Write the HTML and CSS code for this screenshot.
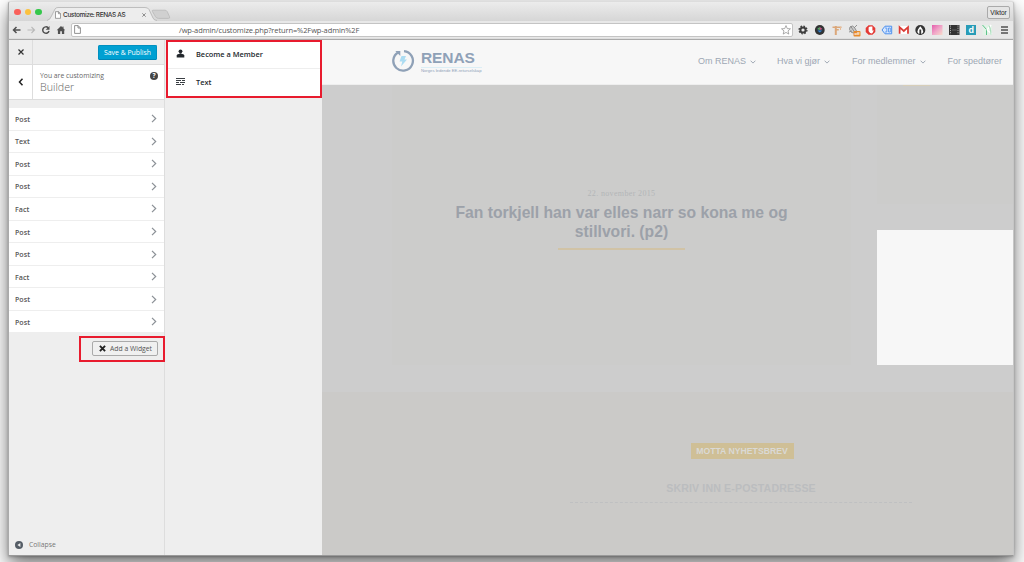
FILE: index.html
```html
<!DOCTYPE html>
<html lang="en">
<head>
<meta charset="utf-8">
<title>Customize: RENAS AS</title>
<link rel="stylesheet" href="styles.css">
</head>
<body>
<svg width="0" height="0" class="defs"><defs>
<symbol id="chev" viewBox="0 0 6 9"><path d="M1 .8 4.7 4.5 1 8.2" fill="none" stroke="#8b9096" stroke-width="1.2"/></symbol>
<symbol id="down" viewBox="0 0 6 4"><path d="M.6.7 3 3.1 5.4.7" fill="none" stroke="#a1aab5" stroke-width="1"/></symbol>
<symbol id="page" viewBox="0 0 7 9"><path d="M.6.6h3.6l2.2 2.3v5.5H.6zM4 .7V3h2.3" fill="#fff" stroke="#777" stroke-width=".8"/></symbol>
</defs></svg>
<div class="window">
  <div class="tabs">
    <svg class="tab-shape" width="130" height="20" viewBox="0 0 130 20"><path d="M0 19.5 Q3 19 4.5 15 L8 8 Q9 6.5 11 6.5 H98 Q101 6.5 102 8.5 L106 17 Q107 19.5 110 19.5 V20 H0Z" fill="#ededed"/><path d="M0 19.5 Q3 19 4.5 15 L8 8 Q9 6.5 11 6.5 H98 Q101 6.5 102 8.5 L106 17 Q107 19.5 110 19.5" fill="none" stroke="#aaa" stroke-width=".7"/><path d="M106 9.200h12q1.500 0 2.300 1.500l2.200 5q.8 1.700-1 1.700h-10q-2 0-3-1.700l-3-5q-.8-1.500.5-1.500z" fill="#d0d0d0" stroke="#b4b4b4" stroke-width=".7"/></svg>
    <div class="lights"><i class="red"></i><i class="yellow"></i><i class="green"></i></div>
    <svg class="tab-page" width="6" height="8"><use href="#page"/></svg>
    <span class="tab-title">Customize: RENAS AS</span>
    <svg class="tab-close" width="4" height="4" viewBox="0 0 4 4"><path d="M.3.3 3.700 3.700M3.700.3.3 3.700" stroke="#777" stroke-width=".8"/></svg>
    <span class="profile">Viktor</span>
  </div>
  <div class="toolbar">
    <svg class="nav" width="56" height="12" viewBox="0 0 56 12"><path d="M8.500 6H1.800M4.500 3 1.500 6l3 3" fill="none" stroke="#505050" stroke-width="1.500"/><path d="M15.500 6H22M19.500 3l3 3-3 3" fill="none" stroke="#b9b9b9" stroke-width="1.100"/><path d="M36.200 3.800A3.200 3.200 0 1 0 37 7" fill="none" stroke="#505050" stroke-width="1.500"/><path d="M37.500 2v3.700h-3.800z" fill="#505050"/><path d="M49 2 44.700 6.200h1.200v3.700h2.300V7.300h1.700v2.600h2.300V6.200h1L51.500 4.500V2.600h-1v.9z" fill="#505050"/></svg>
    <div class="url"><svg width="7" height="9"><use href="#page"/></svg><span>/wp-admin/customize.php?return=%2Fwp-admin%2F</span>
      <svg width="10" height="10" viewBox="0 0 10 10"><path d="m5 .6 1.250 3 3.200.2L7 5.900l.8 3.200L5 7.400 2.200 9.100 3 5.900.5 3.800l3.200-.2z" fill="#fff" stroke="#888" stroke-width=".7"/></svg></div>
    <svg class="ext" width="213" height="14" viewBox="0 0 213 14">
      <circle cx="7" cy="7" r="2.600" fill="none" stroke="#3d3d3d" stroke-width="2"/><circle cx="7" cy="7" r="3.900" fill="none" stroke="#3d3d3d" stroke-width="1.300" stroke-dasharray="1.600 1.460"/>
      <circle cx="23.800" cy="7" r="4.900" fill="#333"/><circle cx="23.800" cy="7" r="2.700" fill="#293c50"/><path d="M21.200 6l2.600-2V7z" fill="#5bb860"/><path d="M23.800 4 26.500 6l-2.700 1z" fill="#c9557e"/><path d="M21.500 7.500h4.500L23.800 9.500z" fill="#3a86cc"/>
      <path d="M36.500 4.200h9M39.800 6.800h3" stroke="#dba77a" stroke-width="1.600"/><path d="M39.800 3v9" stroke="#dba77a" stroke-width="2"/><path d="M44.500 4v3" stroke="#e9bd98"/>
      <path d="m54 4 2.500-1 2 1.500 2 3.500-2 2-3-.5-2-3zM54.500 3l4 6M61 2l-3 3M53 9l3-1" stroke="#888" fill="#ccc" stroke-width=".9"/><rect x="57.500" y="8" width="7" height="5.500" rx="1" fill="#e78b2c"/><text x="58.500" y="12.200" class="off">off</text>
      <path d="M72.500 2.300h4l2.800 2.800v4L76.500 11.800h-4l-2.800-2.800V5z" fill="#e43935"/><path d="M72.600 4.500q.4-1.300 3.800-.9v4.200l1.200-.8q-.5 3.400-2.300 3.400-1.500 0-2.700-2.400z" fill="#fff"/>
      <path d="M89 3.200h6.700v7.600H89L86 7z" fill="#d6e7ff" stroke="#4c8fed"/><path d="M89 5h1.800v4H89M92.500 5h1.800v4h-1.800z" stroke="#4c8fed" fill="none" stroke-width=".8"/>
      <rect x="102.500" y="3" width="10.500" height="8" rx=".8" fill="#fff"/><path d="M103.600 10.800V4.200l4.200 3.800 4.200-3.800v6.600" fill="none" stroke="#db3c36" stroke-width="1.800"/>
      <circle cx="124.300" cy="7" r="5" fill="#353535"/><path d="M122.600 10.800q-2-2.300-.6-4.300 1.200-1.800 2.300-3.200 1.100 1.400 2.300 3.200 1.400 2-.6 4.300z" fill="#fff"/><path d="M124.300 6.500v5.500" stroke="#353535" stroke-width="1.800"/>
      <rect x="136" y="2" width="10.500" height="10" fill="url(#pink)"/><defs><linearGradient id="pink" x2="1" y2="1"><stop stop-color="#e45dac"/><stop offset=".5" stop-color="#f0a4c8"/><stop offset="1" stop-color="#f7dccb"/></linearGradient></defs>
      <rect x="153" y="2" width="10.500" height="10" fill="#333"/><path d="M154.500 2.500v9M162 2.500v9" stroke="#aaa" stroke-width="1" stroke-dasharray="1.200 1"/><path d="M156 7h4.700" stroke="#777" stroke-width=".7"/>
      <rect x="170" y="2" width="10" height="10" fill="#299cb7"/><text x="172.500" y="10" class="dee">d</text>
      <rect x="186.500" y="2" width="9.500" height="10" fill="#e3f2e7"/><path d="m186.500 2 4 4.500V12" fill="none" stroke="#5ec48a"/><path d="m191 7 4-5M191 7l5 4" fill="none" stroke="#fff" stroke-width="1.500"/><path d="m193 2.500 1.500 4 .5 5" fill="none" stroke="#a6dcb9"/>
      <path d="M205 4h7M205 7h7M205 10h7" stroke="#505050" stroke-width="1.500"/>
    </svg>
  </div>
  <div class="content">
    <aside class="sidebar">
      <div class="actions"><div class="square"><svg width="6" height="6" viewBox="0 0 6 6"><path d="m.5.5 5 5m0-5-5 5" stroke="#333" stroke-width="1.200"/></svg></div><span class="save">Save &amp; Publish</span></div>
      <div class="heading"><div class="square"><svg width="6" height="8" viewBox="0 0 6 8"><path d="M4.500.8 1.500 4l3 3.200" fill="none" stroke="#222" stroke-width="1.500"/></svg></div>
        <div class="titles"><span class="small">You are customizing</span><span class="builder">Builder</span></div><span class="help">?</span></div>
      <ul class="list">
        <li><span>Post</span><svg width="6" height="9"><use href="#chev"/></svg></li>
        <li><span>Text</span><svg width="6" height="9"><use href="#chev"/></svg></li>
        <li><span>Post</span><svg width="6" height="9"><use href="#chev"/></svg></li>
        <li><span>Post</span><svg width="6" height="9"><use href="#chev"/></svg></li>
        <li><span>Fact</span><svg width="6" height="9"><use href="#chev"/></svg></li>
        <li><span>Post</span><svg width="6" height="9"><use href="#chev"/></svg></li>
        <li><span>Post</span><svg width="6" height="9"><use href="#chev"/></svg></li>
        <li><span>Fact</span><svg width="6" height="9"><use href="#chev"/></svg></li>
        <li><span>Post</span><svg width="6" height="9"><use href="#chev"/></svg></li>
        <li><span>Post</span><svg width="6" height="9"><use href="#chev"/></svg></li>
      </ul>
      <div class="add-box"><div class="add"><svg width="7" height="7" viewBox="0 0 7 7"><path d="m.9.9 5.200 5.200m0-5.200L.9 6.100" stroke="#222" stroke-width="1.900"/></svg><span>Add a Widget</span></div></div>
      <div class="collapse"><svg width="8" height="8" viewBox="0 0 8 8"><circle cx="4" cy="4" r="4" fill="#555d66"/><path d="M5.400 2v4L2.400 4z" fill="#eee"/></svg><span>Collapse</span></div>
    </aside>
    <section class="widgets">
      <div class="choices">
        <div class="choice"><svg width="9" height="9" viewBox="0 0 9 9"><circle cx="4.500" cy="2.300" r="1.900" fill="#23282d"/><path d="M.7 8.500V6.600q0-1.300 2-1.700h3.600q2 .4 2 1.700v1.900z" fill="#23282d"/><path d="M3.200 4.200h2.600L4.500 6z" fill="#23282d"/></svg><span>Become a Member</span></div>
        <div class="choice"><svg width="9" height="8" viewBox="0 0 9 8" shape-rendering="crispEdges"><path d="M0 .5h9M0 2.500h5M6 2.500h3M0 4.500h3M4 4.500h5M0 6.500h5M6 6.500h2" stroke="#3a3f44" stroke-width="1"/></svg><span>Text</span></div>
      </div>
    </section>
    <main class="preview">
      <header class="site">
        <svg class="ring" width="24" height="24" viewBox="0 0 24 24"><path d="M7.500 3.200A9.800 9.800 0 1 0 13 2.100" fill="none" stroke="#8fa1b7" stroke-width="2.300"/><path d="M4.300 2h5v5z" fill="#8fa1b7"/><path d="M10.500 7h4.500l-1.500 3.500h2.500L10 17.500l1.300-5H8.500z" fill="#abdcf2"/></svg>
        <div class="brand"><b>RENAS</b><small>Norges ledende EE-returselskap</small></div>
        <nav><a class="n1">Om RENAS</a><svg width="6" height="4"><use href="#down"/></svg><a class="n2">Hva vi gjør</a><svg width="6" height="4"><use href="#down"/></svg><a class="n3">For medlemmer</a><svg width="6" height="4"><use href="#down"/></svg><a class="n4">For spedtører</a></nav>
      </header>
      <div class="grid">
        <article class="card"><time>22. november 2015</time><h2>Fan torkjell han var elles narr so kona me og<br><span>stillvori. (p2)</span></h2><div class="rule"></div></article>
        <div class="side"><div class="tile"><i></i></div><div class="white"></div></div>
      </div>
      <footer class="news"><span class="pill">MOTTA NYHETSBREV</span><div class="field"><span>SKRIV INN E-POSTADRESSE</span></div></footer>
    </main>
  </div>
</div>
</body>
</html>
```
FILE: styles.css
```css
* { box-sizing: border-box; }
body { margin: 0; width: 1024px; height: 562px; overflow: hidden; background: #fff; padding: 1px 10px 0 8px; font-family: "Open Sans", sans-serif; }
svg { display: block; flex: none; }
.defs { position: absolute; }
span, a { white-space: nowrap; }
.window { width: 1006px; height: 555px; border: 1px solid #c6c6c6; border-top-color: #ddd; border-bottom-color: #999; border-left-color: #aaa; border-radius: 3px 3px 1px 1px; box-shadow: 0 9px 19px rgba(0,0,0,.55), 0 1px 3px rgba(0,0,0,.25); background: #eee; overflow: hidden; }
.tabs { height: 19px; background: linear-gradient(#ececec, #d6d6d6); position: relative; display: flex; align-items: center; padding: 4px 3px 0 5px; }
.tab-shape { position: absolute; left: 38px; top: -1px; }
.lights { display: flex; gap: 4px; margin-top: -3px; }
.lights i { width: 6.500px; height: 6.500px; border-radius: 50%; }
.red { background: #f9605a; }
.yellow { background: #fbc13e; }
.green { background: #35c74b; }
.tab-page { position: relative; margin-left: 13.500px; margin-top: 3px; }
.tab-title { position: relative; margin: 3px 0 0 2px; width: 62px; font: 500 6.500px Inter, sans-serif; color: #333; letter-spacing: -.35px; }
.tab-close { position: relative; margin: 2px 0 0 17px; }
.profile { margin-left: auto; margin-top: -3px; width: 23px; height: 13px; border: 1px solid #aaa; border-radius: 2px; font: 6.500px/11px "Liberation Sans", sans-serif; text-align: center; color: #222; background: #e5e5e5; }
.toolbar { height: 19px; background: #e8e8e8; border-bottom: 1px solid #aaa; box-shadow: inset 0 -1px #dedede; display: flex; align-items: center; padding: 0 2px 1px 3px; }
.url { margin-left: 3px; width: 722px; height: 14px; background: #fff; border: 1px solid #c4c4c4; border-radius: 2px; display: flex; align-items: center; padding: 0 1px 0 2px; font-size: 7.500px; color: #555; }
.url span { margin-left: 98px; letter-spacing: -.11px; }
.url svg:last-child { margin-left: auto; }
.ext { margin-left: 3px; }
.off { font: bold 4px "Liberation Sans", sans-serif; fill: #fff; }
.dee { font: bold 9px "Liberation Sans", sans-serif; fill: #fff; }
.content { display: flex; height: 515px; }
.sidebar { width: 156px; border-right: 1px solid #ddd; display: flex; flex-direction: column; }
.actions { height: 24px; display: flex; align-items: center; justify-content: space-between; padding-right: 7px; }
.square { width: 24px; height: 100%; border-right: 1px solid #ddd; display: flex; align-items: center; justify-content: center; flex: none; }
.save { background: #00a0d2; border: 1px solid #0090c0; border-bottom-color: #0085b5; color: #fff; width: 59px; height: 15px; border-radius: 1.500px; text-align: center; font-size: 6.900px; line-height: 13px; }
.heading { height: 36px; background: #fff; border: solid #ddd; border-width: 1px 0; display: flex; }
.titles { display: flex; flex-direction: column; padding: 6px 0 0 7px; flex: 1; color: #666; }
.small { font-size: 6.800px; line-height: 9px; }
.builder { font-size: 10.700px; line-height: 15px; font-weight: 300; }
.help { width: 8px; height: 8px; margin: 7px 6px 0 0; border-radius: 50%; background: #444; color: #fff; font-size: 6.500px; line-height: 8px; text-align: center; font-weight: bold; }
.list { list-style: none; margin: 8px 0 0; padding: 0; }
.list li { height: 22.550px; background: #fff; border-bottom: 1px solid #eee; display: flex; align-items: center; justify-content: space-between; padding: 0 7px 0 6px; font-size: 7.100px; font-weight: 600; color: #555; }
.add-box { margin: 3px 0 0 69.500px; width: 86px; height: 26px; border: 2px solid #e81b2e; padding: 3px 0 0 11.500px; }
.add { width: 66px; height: 15px; border: 1px solid #aaa; border-radius: 2px; background: #f0f0f0; display: flex; align-items: center; gap: 4px; padding-left: 6px; font-size: 6.800px; color: #555; }
.collapse { margin-top: auto; margin-bottom: 6px; padding-left: 6px; display: flex; align-items: center; gap: 6px; font-size: 6.800px; color: #777; }
.widgets { width: 157px; padding: 0 0 0 1px; flex: none; }
.choices { width: 156px; height: 58px; border: 2px solid #e81b2e; background: #fff; }
.choice { height: 26px; display: flex; align-items: center; padding-left: 8px; gap: 11px; font-size: 7.400px; font-weight: 600; color: #23282d; padding-bottom: 3px; }
.choice + .choice { height: 28px; border-top: 1px solid #eee; padding-bottom: 1px; }
.preview { flex: 1; min-width: 0; background: #cdcdcd; font-family: "Liberation Sans", sans-serif; }
.site { height: 45px; background: #f7f7f7; border-bottom: 1px solid #eee; display: flex; align-items: flex-start; padding-left: 69px; }
.ring { margin-top: 9px; }
.brand { margin: 9px 0 0 6px; display: flex; flex-direction: column; color: #8fa1b7; }
.brand b { font-size: 15.500px; line-height: 18px; letter-spacing: -.1px; }
.brand small { font-size: 4.200px; line-height: 5px; white-space: nowrap; border-top: 1px solid #dceef5; width: 61px; }
nav { display: flex; align-items: center; margin: 16px 0 0 216px; font-size: 9px; line-height: 11px; color: #9da7b4; }
nav svg { margin-left: 4px; }
.n2 { margin-left: 21px; }
.n3 { margin-left: 22px; }
.n4 { margin-left: 22px; }
.grid { display: flex; height: 307px; padding-left: 70px; gap: 26px; }
.card { width: 459px; height: 280px; background: #cccccb; padding-top: 104px; text-align: center; }
time { display: block; font: 8px/10px "Liberation Serif", serif; letter-spacing: .35px; color: #b3b6b8; }
h2 { margin: 4px 0 0; font-size: 15.700px; line-height: 19px; color: #9ca1a9; white-space: nowrap; }
.rule { width: 127px; height: 2px; background: #d1c3a6; margin: 7px auto 0; }
.side { flex: 1; display: flex; flex-direction: column; gap: 26px; }
.tile { height: 119px; background: #cccccb; }
.tile i { display: block; width: 27px; height: 1px; margin-left: 26px; background: #d7ceb9; }
.white { height: 135px; background: #f7f7f7; }
.news { height: 163px; background: #cbcac8; display: flex; flex-direction: column; align-items: center; padding: 51px 0 0 149px; }
.pill { width: 103px; height: 16px; background: #cfbf96; color: #dad9d5; font-size: 8.700px; line-height: 16px; font-weight: bold; text-align: center; }
.field { margin-top: 21px; margin-right: 2px; width: 342px; height: 23px; border-bottom: 1px dashed #bfc0c2; text-align: center; color: #bbbdbf; font-size: 10.600px; font-weight: bold; line-height: 16px; letter-spacing: .14px; }
```
